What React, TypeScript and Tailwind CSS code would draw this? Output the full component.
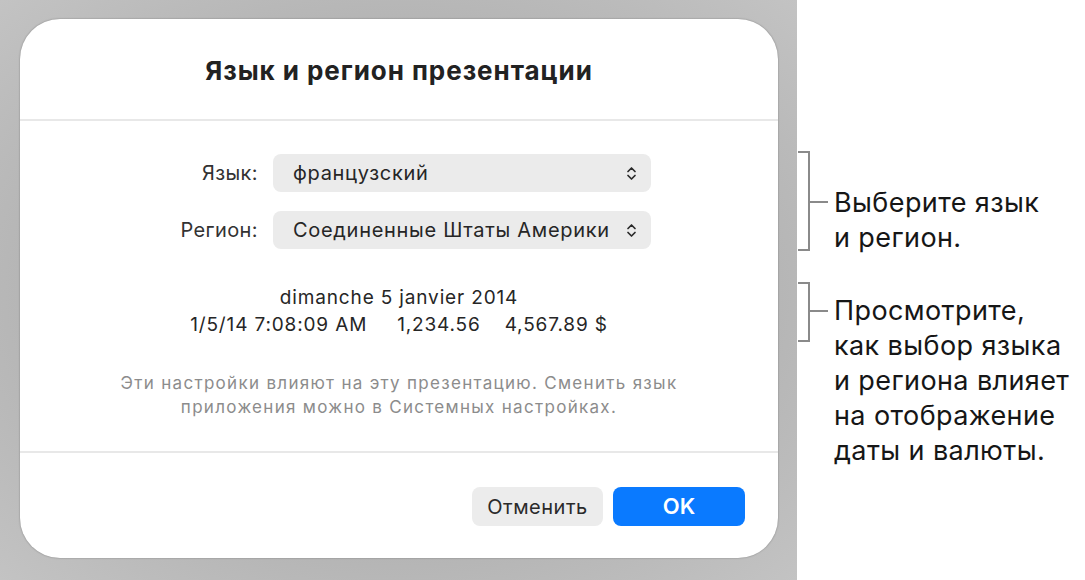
import React from "react";

const font = { fontFamily: "Inter, 'Noto Sans', sans-serif" };

function UpDown() {
  return (
    <svg width="11" height="15" viewBox="0 0 11 15" fill="none" stroke="#2a2a2a" strokeWidth="1.7" strokeLinecap="round" strokeLinejoin="round">
      <path d="M2 5.5 L5.5 2 L9 5.5" />
      <path d="M2 9.5 L5.5 13 L9 9.5" />
    </svg>
  );
}

function Select({ value }: { value: string }) {
  return (
    <div className="flex h-[38px] items-center justify-between rounded-[8px] bg-[#ebebeb] pl-[20px] pr-[14px] text-[20px] tracking-[0.7px] text-[#262626]">
      <span>{value}</span>
      <UpDown />
    </div>
  );
}

function Bracket({ h, tick }: { h: number; tick: number }) {
  return (
    <svg width="32" height={h + 2} viewBox={`0 0 32 ${h + 2}`} fill="none" stroke="#8a8a8a" strokeWidth="2">
      <path d={`M1 1 H12 V${h + 1} H1`} />
      <path d={`M12 ${tick} H31`} />
    </svg>
  );
}

export default function App() {
  return (
    <div className="flex h-[580px] w-[1085px] bg-white" style={font}>
      {/* backdrop + dialog */}
      <div className="h-[580px] w-[797px] bg-[radial-gradient(ellipse_at_center,#b1b1b1_55%,#c3c3c3_100%)] pl-[20px] pt-[19px]">
        <div className="flex h-[539px] w-[758px] flex-col rounded-[40px] bg-white shadow-[0_0_2px_rgba(0,0,0,0.35)]">
          <div className="flex h-[100px] items-center justify-center pt-[2px] text-[26px] font-bold tracking-[0.95px] text-[#222]">
            Язык и регион презентации
          </div>
          <div className="h-[2px] bg-[#e8e8e8]" />

          <div className="flex h-[330px] flex-col">
            <div className="ml-[138px] mt-[33px] grid grid-cols-[100px_378px] items-center gap-x-[15px] gap-y-[19px] text-[20px] tracking-[0.4px] text-[#333]">
              <span className="text-right">Язык:</span>
              <Select value="французский" />
              <span className="text-right">Регион:</span>
              <Select value="Соединенные Штаты Америки" />
            </div>

            <div className="mt-[35px] flex flex-col items-center text-[19px] leading-[27px] tracking-[0.85px] text-[#262626]">
              <span>dimanche 5 janvier 2014</span>
              <span>
                1/5/14 7:08:09 AM<span className="ml-[30px]">1,234.56</span>
                <span className="ml-[24px]">4,567.89 $</span>
              </span>
            </div>

            <div className="mt-[33px] text-center text-[17px] leading-[24px] tracking-[1.3px] text-[#8c8c8c]">
              Эти настройки влияют на эту презентацию. Сменить язык
              <br />
              приложения можно в Системных настройках.
            </div>
          </div>

          <div className="h-[2px] bg-[#e8e8e8]" />
          <div className="flex flex-1 items-start justify-end gap-[10px] pr-[33px] pt-[34px]">
            <button className="h-[39px] w-[131px] rounded-[8px] bg-[#ececec] text-[20px] tracking-[0.5px] text-[#2a2a2a]">Отменить</button>
            <button className="h-[39px] w-[132px] rounded-[8px] bg-[#0a7aff] text-[22px] font-semibold text-white">OK</button>
          </div>
        </div>
      </div>

      {/* callouts */}
      <div className="flex flex-1 flex-col pt-[151px] text-[27px] leading-[35px] tracking-[0.4px] text-[#161616]">
        <div className="flex items-start">
          <Bracket h={98} tick={51} />
          <div className="ml-[5px] mt-[34px]">
            Выберите язык
            <br />и регион.
          </div>
        </div>
        <div className="mt-[27px] flex items-start">
          <Bracket h={58} tick={29} />
          <div className="ml-[5px] mt-[11px]">
            Просмотрите,
            <br />
            как выбор языка
            <br />и региона влияет
            <br />
            на отображение
            <br />
            даты и валюты.
          </div>
        </div>
      </div>
    </div>
  );
}
